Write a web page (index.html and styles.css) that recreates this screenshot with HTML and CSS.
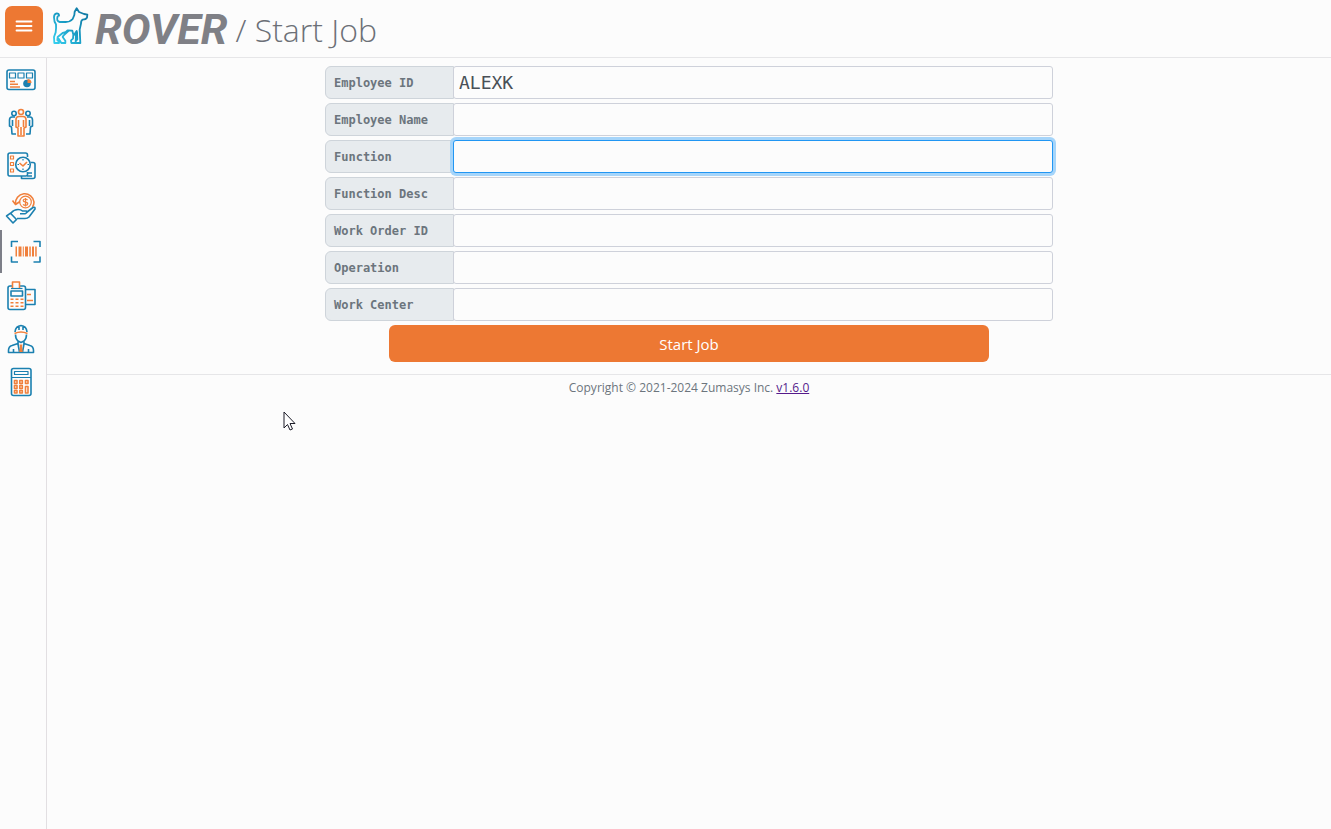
FILE: index.html
```html
<!DOCTYPE html>
<html lang="en">
<head>
<meta charset="utf-8">
<meta name="viewport" content="width=device-width, initial-scale=1">
<title>Rover / Start Job</title>
<link rel="stylesheet" href="styles.css">
</head>
<body>
<header class="topbar">
  <button class="menu-button" type="button" aria-label="Toggle menu">
    <svg width="18" height="14" viewBox="0 0 18 14"><path d="M1.500 2.500h15M1.500 7h15M1.500 11.500h15" stroke="#fff" stroke-width="1.800" stroke-linecap="round"/></svg>
  </button>
  <div class="brand">
    <svg class="dog" viewBox="159 24 108 114" fill="none" aria-hidden="true">
      <defs><linearGradient id="dogfill" x1="0" x2="1" y1="1" y2="0"><stop offset="0" stop-color="#35d0f0"/><stop offset=".5" stop-color="#1697c0"/><stop offset="1" stop-color="#12749f"/></linearGradient></defs>
      <path stroke="url(#dogfill)" stroke-width="5.500" stroke-linejoin="round" stroke-linecap="round" d="M177 50q0-7-7-7-8 1-8 12 0 14 6 21 1 12-1 24l-5 14 1 18h14l-1-5-4-4 1-9 15-12q11-2 15-8l14 1 3 12-1 12-6 5 1 8h13l1-29M173 52q-5 14 6 17h18q13 0 21-9l5-12 1-10 6-10 7 11 15 6 10 2-1 9q-3 6-13 6-5 2-5 12l-4 18 2 40h-14v-6l5-5-1-22M205 96l-14 13-3 5 8 11v7h-12l-8-13M230 96l-8 12"/>
    </svg>
    <span class="brand-name">ROVER</span>
  </div>
  <h1 class="title"><span>/</span> Start Job</h1>
</header>
<div class="shell">
  <nav class="sidebar" aria-label="Modules">
    <a class="nav-item" href="#" aria-label="Dashboard">
      <svg viewBox="0 0 36 36"><rect class="b" x="4" y="8" width="28" height="19.500" rx="2"/><path class="b thin" d="M6.500 11h6v5h-6zM15 11h6v5h-6zM23.500 11h6v5h-6z"/><path class="o" d="M7 19.500h5M7 22.200h8M7 25h10"/><circle cx="24" cy="21.500" r="3.800" fill="#1b80b0"/><path d="M24.500 21v-4a4 4 0 0 1 4 4z" fill="#f0803c"/></svg>
    </a>
    <a class="nav-item" href="#" aria-label="People">
      <svg viewBox="0 0 36 36"><circle class="b" cx="11" cy="8.500" r="2.200"/><circle class="b" cx="25" cy="8.500" r="2.200"/><path class="b" d="M12 12H9q-2.500 0-2.500 3v6l2 1 .5 7h4M24 12h3q2.500 0 2.500 3v6l-2 1-.5 7h-4M9.500 15v6M26.500 15v6"/><circle class="o" cx="18" cy="7" r="2.500"/><path class="o" d="M16 11.500h4q3 0 3 3V22l-2 1v8h-6v-8l-2-1v-7.500q0-3 3-3zM15.500 15v7M20.500 15v7M18 22v8"/></svg>
    </a>
    <a class="nav-item" href="#" aria-label="Scheduling">
      <svg viewBox="0 0 36 36"><path class="b" d="M14 28H6.500Q5 28 5 26V7q0-2 2-2h15.500q2 0 2 2v2M24.500 24v2.500q0 1.500-1.500 1.500h-9M27.500 14.500h2.500q2 0 2 2v12q0 2-2 2H18.500V28M24 28H29M25 25h4"/><circle class="b" cx="20" cy="16.500" r="7.300"/><path class="o thin" d="M7.500 8h3v3h-3zM7.500 14.500h3v3h-3zM7.500 21h3v3h-3z"/><path class="o" d="m16.500 15 3.500 3 4-4"/><path class="b thin" d="M20 11v1.500M20 20.500V22M14.500 16.500H16M24.500 16.500H26"/></svg>
    </a>
    <a class="nav-item" href="#" aria-label="Finance">
      <svg viewBox="0 0 36 36"><path class="o" d="M12.500 13a9.300 9.300 0 0 1 18.500-2q0 3-1.500 5M9.500 9.500l3 4 4.500-3"/><circle class="o thin" cx="22.500" cy="11" r="5.800"/><path class="o thin" d="M24.500 9q-1-1-2.500-1-1.800.2-1.800 1.600 0 1.200 2.300 1.500 2.300.3 2.200 1.700-.2 1.500-2.200 1.500-1.500 0-2.500-1M22.500 7v8.500"/><path class="b" d="m3.500 25 4-2.800 6 6.300-3.500 3.500zM8 22q3-3.500 7-3.500 3 0 4.500 1.500h4q1 2-1.500 2.800H17M23.500 21.500l6.500-5q2.500-.8 2 1.500l-6 8q-1.500 1.500-4 1.500h-8"/></svg>
    </a>
    <a class="nav-item active" href="#" aria-label="Labor scanning" aria-current="page">
      <svg viewBox="0 0 36 36"><path class="b" d="M4.500 13V7.500H11M26.500 7.500H33V13M33 22.500V28h-6.500M11 28H4.500v-5.500"/><path fill="#f0803c" d="M8.500 12.500h1.500v10H8.500zM11.500 12.500h3v10h-3zM15.800 12.500h1v10h-1zM18 12.500h3v10h-3zM22.300 12.500h1.500v10h-1.500zM25 12.500h2v10h-2zM28.200 12.500h1.500v10h-1.500z"/></svg>
    </a>
    <a class="nav-item" href="#" aria-label="Point of sale">
      <svg viewBox="0 0 36 36"><path class="b" d="M9 9H7Q5 9 5 11v19.500q0 2 2 2h13.500q2 0 2-2V11q0-2-2-2H17M8 14h11.500v5H8zM22.500 12.500h9.500v15h-9.500"/><path class="b thin" d="M8 11.500h11.500"/><path class="o" d="M9.500 11V5h7v6M24 17.500h4M24 23.500h6"/><path fill="#f0803c" d="M7.500 21.500h3V23h-3zM12.500 21.500h3V23h-3zM17.500 21.500h3V23h-3zM7.500 25h3v1.500h-3zM12.500 25h3v1.500h-3zM17.500 25h3v1.500h-3zM7.500 28.500h3V30h-3zM12.500 28.500h3V30h-3zM17.500 28.500h3V30h-3z"/></svg>
    </a>
    <a class="nav-item" href="#" aria-label="Workers">
      <svg viewBox="0 0 36 36"><path class="b" d="M12 12Q12.500 6 18 5.500q5.500.5 6 6.500M16 6v4M20 6v4M12.500 14.500q0 4.500 2.500 6.500l3 1.500 3-1.500q2.500-2 2.500-6.500M15 21.500v2L9 25.500q-3.500 1-3.500 5v2h25v-2q0-4-3.500-5l-6-2v-2M10.500 29v3M25.500 29v3M15 24l1.500 8M21 24l-1.500 8"/><path class="o" d="M11.500 13.500q6.500-3 13 0"/><path fill="#f0803c" d="M16.500 24.500h3l-.5 2 .8 5.500h-3.600l.8-5.500z"/></svg>
    </a>
    <a class="nav-item" href="#" aria-label="Accounting">
      <svg viewBox="0 0 36 36"><rect class="b" x="8.500" y="5.500" width="19.500" height="27" rx="2"/><path class="b thin" d="M11.500 8.500h13.500v3H11.500zM9 14.500h19"/><path class="o" d="M11.500 17.500H14v3h-2.500zM16.800 17.500h2.500v3h-2.500zM22.500 17.500H25v3h-2.500zM11.500 22.500H14v3h-2.500zM16.800 22.500h2.500v3h-2.500zM11.500 27.500H14v2.500h-2.500zM16.800 27.500h2.500v2.500h-2.500zM22.500 23.500H25v6.500h-2.500z"/></svg>
    </a>
  </nav>
  <main class="main">
    <form class="job-form">
      <div class="field"><label for="emp-id">Employee ID</label><input id="emp-id" type="text" value="ALEXK"></div>
      <div class="field"><label for="emp-name">Employee Name</label><input id="emp-name" type="text"></div>
      <div class="field"><label for="func">Function</label><input class="current" id="func" type="text"></div>
      <div class="field"><label for="func-desc">Function Desc</label><input id="func-desc" type="text"></div>
      <div class="field"><label for="wo">Work Order ID</label><input id="wo" type="text"></div>
      <div class="field"><label for="op">Operation</label><input id="op" type="text"></div>
      <div class="field"><label for="wc">Work Center</label><input id="wc" type="text"></div>
      <button class="submit" type="button">Start Job</button>
    </form>
    <footer class="footer">Copyright © 2021-2024 Zumasys Inc. <a href="#">v1.6.0</a></footer>
  </main>
</div>
<svg class="pointer" viewBox="0 0 13 20" aria-hidden="true"><path d="M1 1v16l3.500-3.500 2.500 5.500 2.500-1-2.500-5.500h5z" fill="#fff" stroke="#1c1c28" stroke-width="1"/></svg>
</body>
</html>
```
FILE: styles.css
```css
* { box-sizing: border-box; }

body {
  margin: 0;
  min-height: 100vh;
  display: flex;
  flex-direction: column;
  background: #fcfcfc;
  color: #6c757d;
  font-family: "Open Sans", "Noto Sans", sans-serif;
}

.topbar {
  display: flex;
  align-items: center;
  height: 58px;
  padding: 0 5px 5px;
  border-bottom: 1px solid #e6e6e8;
}

.menu-button {
  display: flex;
  align-items: center;
  justify-content: center;
  width: 38px;
  height: 40px;
  padding: 0;
  border: 0;
  border-radius: 7px;
  background: #ed7833;
}

.brand {
  display: flex;
  align-items: center;
  gap: 6px;
  margin-left: 10px;
}

.dog { width: 36px; height: 38px; }

.brand-name {
  color: #7f8086;
  font: italic 700 43px/44px Roboto, sans-serif;
  padding-top: 6px;
}

.title {
  margin: 0 0 0 8px;
  padding-top: 7px;
  color: #6c7077;
  font: 300 32px/40px "Open Sans", sans-serif;
}

.shell { display: flex; flex: 1; }

.sidebar {
  flex: 0 0 47px;
  border-right: 1px solid #e2dfe2;
}

.nav-item {
  display: block;
  height: 43px;
  padding: 4px 0 0 3px;
}

.nav-item.active {
  border-left: 2px solid #7d7f88;
  padding-left: 5px;
}

.nav-item svg {
  display: block;
  width: 36px;
  height: 36px;
}

.b, .o {
  fill: none;
  stroke: #1b80b0;
  stroke-width: 1.6;
  stroke-linejoin: round;
}

.o { stroke: #f0803c; }

.thin { stroke-width: 1.2; }

.main { flex: 1; min-width: 0; }

.job-form {
  display: flex;
  flex-direction: column;
  gap: 4px;
  max-width: 728px;
  margin: 0 auto;
  padding: 8px 0 12px;
}

.field { display: flex; height: 33px; }

.field label {
  flex: 0 0 129px;
  padding-left: 8px;
  border: 1px solid #ced4da;
  border-radius: 6px 0 0 6px;
  background: #e7ebee;
  font: 700 12px/32px "DejaVu Sans Mono", monospace;
}

.field input {
  flex: 1;
  min-width: 0;
  margin-left: -1px;
  padding: 0 5px;
  border: 1px solid #ced1da;
  border-radius: 3px;
  outline: 0;
  background: #fcfcfc;
  color: #495057;
  font: 18px "DejaVu Sans Mono", monospace;
}

.field .current {
  z-index: 1;
  border-color: #2196f3;
  box-shadow: 0 0 0 3px #a6d5fa;
}

.submit {
  width: 100%;
  max-width: 600px;
  height: 37px;
  align-self: center;
  border: 0;
  border-radius: 6px;
  background: #ed7833;
  color: #fff;
  font: 15px "Open Sans", sans-serif;
}

.footer {
  border-top: 1px solid #e6e6e8;
  padding-top: 4px;
  text-align: center;
  font-size: 12px;
  line-height: 18px;
}

.footer a { color: #551a8b; }

.pointer {
  position: absolute;
  left: 283px;
  top: 411px;
  width: 13px;
  height: 20px;
}
```
